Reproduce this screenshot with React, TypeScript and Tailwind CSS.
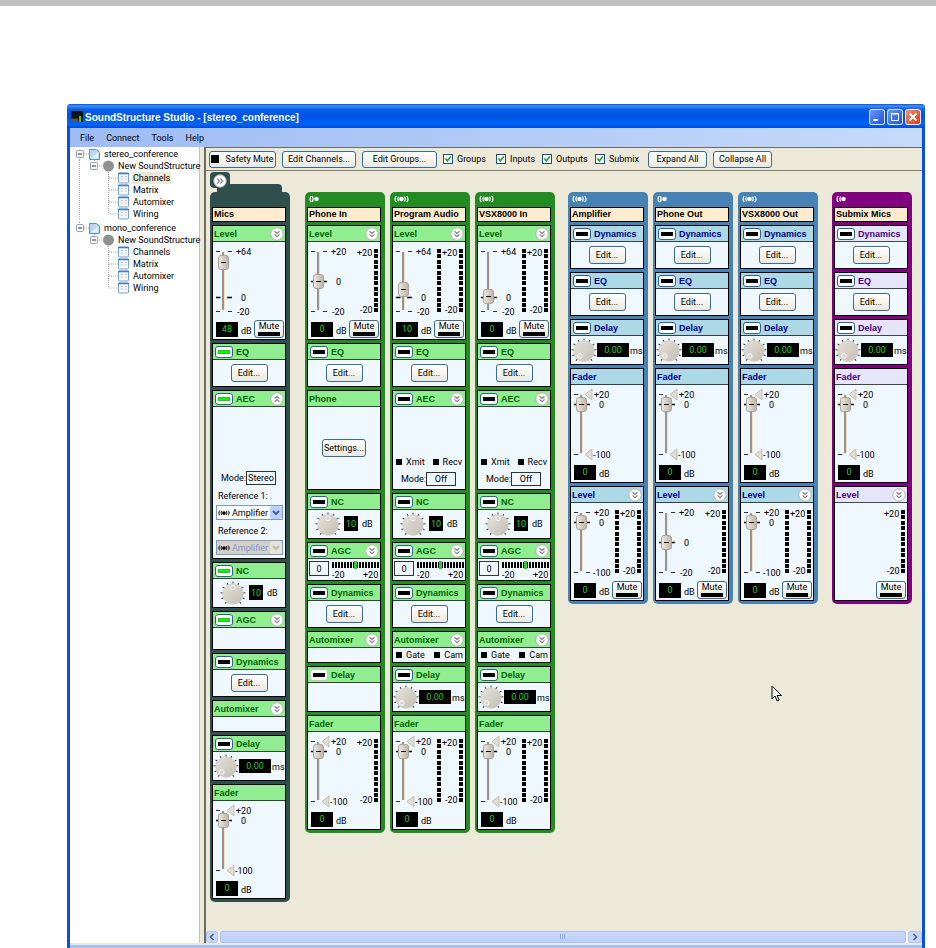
import type { ReactNode } from 'react'

type Tone = 'group' | 'input' | 'output' | 'submix'
type IconKind = 'mono' | 'stereo' | 'left'

const strips: Record<Tone, string> = {
  group: 'bg-[#2f4f4f]',
  input: 'bg-[#228b22]',
  output: 'bg-[#4682b4]',
  submix: 'bg-[#800080]',
}

const headers: Record<Tone, string> = {
  group: 'bg-[#90ee90] text-[#006400]',
  input: 'bg-[#90ee90] text-[#006400]',
  output: 'bg-[#add8e6] text-[#00008b]',
  submix: 'bg-[#e6e6fa] text-[#4b0082]',
}

const xpButton =
  'rounded-[3px] border border-[#3a6a98] bg-linear-to-b from-white to-[#ebe9de] text-black'

function classNames(...classes: (string | false | undefined)[]) {
  return classes.filter(Boolean).join(' ')
}

function SignalIcon({ kind, className }: { kind: IconKind; className?: string }) {
  return (
    <svg width="15" height="8" viewBox="0 0 15 8" className={className} aria-hidden="true">
      <g fill="none" stroke="currentColor" strokeWidth="1.2">
        <path d="M2.2 1C.8 2.8.8 5.2 2.2 7" />
        {kind !== 'mono' && <path d="M4.6 1.6c-1 1.500-1 3.300 0 4.800" />}
        {kind === 'mono' && <path d="M3.200 1c1.100 1.800 1.100 4.200 0 6" />}
        {kind === 'stereo' && <path d="M10.400 1.600c1 1.500 1 3.300 0 4.800M12.800 1c1.400 1.800 1.400 4.200 0 6" />}
      </g>
      <circle cx="7.500" cy="4" r="2.300" fill="currentColor" />
    </svg>
  )
}

function Chevrons({ direction = 'down' }: { direction?: 'down' | 'up' | 'right' }) {
  const angle = { down: 0, up: 180, right: -90 }[direction]
  return (
    <svg width="14" height="14" viewBox="0 0 14 14" aria-hidden="true">
      <circle cx="7" cy="7" r="6.200" fill="#fff" stroke="#b5b5b5" />
      <path
        d="M4.500 4.200 7 6.500l2.500-2.300M4.500 7.400 7 9.700l2.500-2.300"
        transform={`rotate(${angle} 7 7)`}
        fill="none"
        stroke="#858585"
        strokeWidth="1.200"
      />
    </svg>
  )
}

type SectionProps = {
  tone: Tone
  title: string
  height: string
  toggle?: 'on' | 'off' | 'disabled'
  expand?: 'down' | 'up'
  children?: ReactNode
}

function Section({ tone, title, height, toggle, expand, children }: SectionProps) {
  return (
    <section className={classNames('flex flex-col border border-black bg-[#f0f8ff]', height)}>
      <header
        className={classNames(
          'flex h-4 shrink-0 items-center border-b border-black/70 font-[Liberation_Sans,sans-serif] text-[9px] font-bold',
          headers[tone]
        )}>
        {toggle && (
          <button
            type="button"
            aria-label={`${title} enable`}
            aria-pressed={toggle === 'on'}
            className={classNames(
              'mr-[3px] ml-0.5 flex h-3 w-[18px] items-center justify-center rounded-[3px] border bg-white',
              toggle === 'disabled' ? 'border-[#c9c7ba]' : 'border-[#2c628b]'
            )}>
            <span className={classNames('h-1 w-3', toggle === 'on' ? 'border border-[#2fbf2f] bg-[#00ff00]' : 'bg-black')} />
          </button>
        )}
        <h3 className={classNames('grow whitespace-nowrap', !toggle && 'pl-px')}>{title}</h3>
        {expand && (
          <button type="button" aria-label={`Expand ${title}`} className="mr-px">
            <Chevrons direction={expand} />
          </button>
        )}
      </header>
      {children}
    </section>
  )
}

function Readout({ label, value, className }: { label: string; value: string; className: string }) {
  return (
    <input
      aria-label={label}
      defaultValue={value}
      className={classNames('bg-black text-center text-[9px] text-[#22c82e] outline-none', className)}
    />
  )
}

// Travel runs from y=9 (max) to y=69 (min)
function Slider({ label, min, max, value, markers }: { label: string; min: number; max: number; value: number; markers?: boolean }) {
  const zero = Math.round(9 + (60 * max) / (max - min))
  return (
    <div className="grid">
      <svg width="44" height="78" className="col-start-1 row-start-1" aria-hidden="true">
        <path d="M10 10v58" stroke="#9b9389" strokeWidth="2" />
        <path d="M11.500 10v58" stroke="#f2e3cd" />
        <path d={markers ? 'M3 9.500h4M3 69.500h4' : 'M3 9.500h4M15 9.500h4M3 69.500h4M15 69.500h4'} stroke="#333" />
        <path d={`M3 ${zero + 0.5}h4.500M14 ${zero + 0.5}h5`} stroke="#000" strokeWidth="1.400" />
        {markers && (
          <path d="M14 9.500l7-5.500v11zM14 69.500l7-5.500v11z" fill="#e0ddd2" stroke="#b9b5a6" strokeWidth=".8" />
        )}
        <g fill="#000" fontSize="9">
          <text x="23" y="13">+{max}</text>
          <text x="28" y={zero + 4}>0</text>
          <text x={min < -99 ? 22 : 24} y="73">{min}</text>
        </g>
      </svg>
      <input
        type="range"
        aria-label={label}
        min={min}
        max={max}
        defaultValue={value}
        className="col-start-1 row-start-1 mt-0.5 ml-[5px] h-[74px] w-[11px] appearance-none bg-transparent [direction:rtl] [writing-mode:vertical-lr] [&::-webkit-slider-thumb]:h-[15px] [&::-webkit-slider-thumb]:w-[11px] [&::-webkit-slider-thumb]:appearance-none [&::-webkit-slider-thumb]:rounded-[3px] [&::-webkit-slider-thumb]:border [&::-webkit-slider-thumb]:border-[#aaa395] [&::-webkit-slider-thumb]:[background:linear-gradient(#111,#111)_center/5px_1px_no-repeat,linear-gradient(90deg,#ebe7dd,#bdb6a8)]"
      />
    </div>
  )
}

function Meter({ stereo }: { stereo?: boolean }) {
  const segments = Array.from({ length: 12 }, (_, i) => Math.round(7 + i * 5.4))
  return (
    <svg width="28" height="78" aria-hidden="true">
      {segments.map((y) => (
        <g key={y} shapeRendering="crispEdges">
          {stereo && <rect x="0" y={y} width="4" height="4" />}
          <rect x="22" y={y} width="4" height="4" />
        </g>
      ))}
      <text x="5" y="14" fontSize="9">+20</text>
      <text x="8" y="71" fontSize="9">-20</text>
    </svg>
  )
}

function MuteButton() {
  return (
    <button type="button" className={classNames(xpButton, 'ml-auto flex h-[18px] w-[30px] flex-col items-center justify-between pb-px leading-[11px]')}>
      Mute
      <span className="h-1 w-[22px] shrink-0 bg-black" />
    </button>
  )
}

type LevelProps = {
  tone: Tone
  min: number
  max: number
  value: number
  meter?: 'mono' | 'stereo'
}

function Level({ tone, min, max, value, meter }: LevelProps) {
  return (
    <Section tone={tone} title="Level" height="h-[115px]" expand="down">
      <div className="flex">
        <Slider label="Level" min={min} max={max} value={value} />
        {meter && <Meter stereo={meter === 'stereo'} />}
      </div>
      <div className="flex items-center pr-px pl-[3px]">
        <Readout label="Level in dB" value={String(value)} className="h-[15px] w-[22px]" />
        <span className="pt-1 pl-[3px]">dB</span>
        <MuteButton />
      </div>
    </Section>
  )
}

function Fader({ tone, meter }: { tone: Tone; meter?: 'mono' | 'stereo' }) {
  return (
    <Section tone={tone} title="Fader" height="h-[115px]">
      <div className="flex">
        <Slider label="Fader" min={-100} max={20} value={0} markers />
        {meter && <Meter stereo={meter === 'stereo'} />}
      </div>
      <div className="flex h-[18px] items-center pl-[3px]">
        <Readout label="Fader in dB" value="0" className="h-[15px] w-[22px]" />
        <span className="pt-1 pl-[3px]">dB</span>
      </div>
    </Section>
  )
}

function EditSection({ tone, title, toggle = 'off' }: { tone: Tone; title: string; toggle?: 'on' | 'off' }) {
  return (
    <Section tone={tone} title={title} height="h-11" toggle={toggle}>
      <div className="flex grow items-center justify-center">
        <button type="button" className={classNames(xpButton, 'h-[18px] w-[37px]')}>Edit...</button>
      </div>
    </Section>
  )
}

function Knob({ label, angle }: { label: string; angle: number }) {
  const ticks = Array.from({ length: 11 }, (_, i) => -140 + i * 28)
  return (
    <div className="grid shrink-0">
      <svg width="26" height="28" viewBox="0 0 26 28" className="col-start-1 row-start-1" aria-hidden="true">
        <defs>
          <linearGradient id="knob" x1="0" y1="0" x2="1" y2="1">
            <stop offset="0" stopColor="#e6e3dc" />
            <stop offset="1" stopColor="#c2bdb2" />
          </linearGradient>
        </defs>
        {ticks.map((tick) => (
          <path key={tick} d="M13 2.500v3" stroke="#444" transform={`rotate(${tick} 13 15)`} />
        ))}
        <circle cx="13" cy="15" r="10.300" fill="url(#knob)" stroke="#d3cfc6" strokeWidth=".8" />
        <circle cx="13" cy="8.500" r="2.200" fill="#d8d4ca" stroke="#f5f3ee" transform={`rotate(${angle} 13 15)`} />
      </svg>
      <input type="range" aria-label={label} className="col-start-1 row-start-1 h-7 w-[26px] opacity-0" />
    </div>
  )
}

function NoiseCancel({ tone, toggle = 'off' }: { tone: Tone; toggle?: 'on' | 'off' }) {
  return (
    <Section tone={tone} title="NC" height="h-[46px]" toggle={toggle}>
      <div className="flex items-start pl-[7px]">
        <Knob label="Noise cancellation" angle={0} />
        <Readout label="Noise cancellation in dB" value="10" className="mt-1.5 ml-[3px] h-[15px] w-3.5" />
        <span className="pt-2 pl-1">dB</span>
      </div>
    </Section>
  )
}

function Delay({ tone }: { tone: Tone }) {
  return (
    <Section tone={tone} title="Delay" height="h-[46px]" toggle="off">
      <div className="flex items-start">
        <Knob label="Delay" angle={-140} />
        <Readout label="Delay in ms" value="0.00" className="mt-[7px] h-3.5 w-8 shrink-0" />
        <span className="pt-[9px] pl-px">ms</span>
      </div>
    </Section>
  )
}

function GainControl({ tone }: { tone: Tone }) {
  return (
    <Section tone={tone} title="AGC" height="h-[39px]" toggle="off" expand="down">
      <div className="flex gap-[3px] pt-0.5 pl-px">
        <output className="flex h-[15px] w-5 items-center justify-center border border-[#333]">0</output>
        <svg width="48" height="19" aria-hidden="true">
          {Array.from({ length: 16 }, (_, i) => (
            <rect key={i} x={i * 3} y="1" width="2" height="6" shapeRendering="crispEdges" />
          ))}
          <rect x="22" y="0" width="3" height="8" fill="#2fcf2f" />
          <text x="0" y="17" fontSize="9">-20</text>
          <text x="31" y="17" fontSize="9">+20</text>
        </svg>
      </div>
    </Section>
  )
}

function Lamp({ children }: { children: ReactNode }) {
  return (
    <span className="flex items-center gap-1">
      <span className="size-1.5 bg-black" />
      {children}
    </span>
  )
}

function Mode({ value }: { value: string }) {
  return (
    <div className="flex items-center gap-[3px] pl-2">
      <span className="w-[22px]">Mode:</span>
      <output className="flex h-3.5 w-[30px] items-center justify-center border border-[#333]">{value}</output>
    </div>
  )
}

function Reference({ id, label, disabled }: { id: string; label: string; disabled?: boolean }) {
  return (
    <div className="px-0.5">
      <label htmlFor={id} className="block h-5 pt-[5px] pl-0.5">{label}</label>
      <div className="grid items-center">
        <select
          id={id}
          disabled={disabled}
          className={classNames(
            'col-start-1 row-start-1 h-[15px] appearance-none border border-[#7f9db9] pl-[15px] leading-3 opacity-100',
            disabled ? 'bg-[#d4d0c8] text-[#7f95d8]' : 'bg-white'
          )}>
          <option>Amplifier</option>
        </select>
        <SignalIcon kind="stereo" className="pointer-events-none z-10 col-start-1 row-start-1 ml-0.5 w-3" />
        <span
          className={classNames(
            'pointer-events-none z-10 col-start-1 row-start-1 mr-px flex h-[13px] w-3 items-center justify-center justify-self-end rounded-xs',
            disabled ? 'bg-[#e6e3d8] text-[#bbb7a8]' : 'bg-[#bdd0fb] text-[#41598f]'
          )}>
          <svg width="8" height="6" aria-hidden="true">
            <path d="M1 1l3 3 3-3" fill="none" stroke="currentColor" strokeWidth="1.800" />
          </svg>
        </span>
      </div>
    </div>
  )
}

function EchoCancel({ tone }: { tone: Tone }) {
  return (
    <Section tone={tone} title="AEC" height="h-[100px]" toggle="off" expand="down">
      <div className="mt-auto flex justify-between pr-[3px] pb-1 pl-[3px]">
        <Lamp>Xmit</Lamp>
        <Lamp>Recv</Lamp>
      </div>
      <div className="pb-[3px]">
        <Mode value="Off" />
      </div>
    </Section>
  )
}

function Automixer({ tone, lamps }: { tone: Tone; lamps?: boolean }) {
  return (
    <Section tone={tone} title="Automixer" height="h-8" expand="down">
      {lamps && (
        <div className="flex grow items-center justify-between pr-0.5 pl-[3px]">
          <Lamp>Gate</Lamp>
          <Lamp>Cam</Lamp>
        </div>
      )}
    </Section>
  )
}

function Strip({ tone, name, icon, children }: { tone: Tone; name: string; icon?: IconKind; children: ReactNode }) {
  return (
    <article className={classNames('flex w-20 shrink-0 flex-col gap-[3px] rounded-[5px] pr-1 pb-[3px] pl-0.5', strips[tone])}>
      <div>
        <div className="h-[15px] pt-[3px] pl-0.5 text-white">{icon && <SignalIcon kind={icon} />}</div>
        <h2 className="h-[15px] border border-black bg-[#ffebcd] pl-px font-[Liberation_Sans,sans-serif] text-[9px] leading-[13px] font-bold whitespace-nowrap">
          {name}
        </h2>
      </div>
      {children}
    </article>
  )
}

function GroupStrip() {
  return (
    <div>
      <div className="grid h-5">
        <svg width="80" height="24" className="col-start-1 row-start-1" aria-hidden="true">
          <path
            d="M4 0h12q4 0 4 4v8h48q4 0 4 4v8H4v-4h3v-4H5Q0 16 0 12V4Q0 0 4 0z"
            fill="#2f4f4f"
          />
        </svg>
        <button type="button" aria-label="Expand group" className="z-10 col-start-1 row-start-1 mt-0.5 ml-[3px] self-start justify-self-start">
          <Chevrons direction="right" />
        </button>
      </div>
      <Strip tone="group" name="Mics">
        <Level tone="group" min={-20} max={64} value={48} />
        <EditSection tone="group" title="EQ" toggle="on" />
        <Section tone="group" title="AEC" height="h-[169px]" toggle="on" expand="up">
          <div className="mt-auto pb-[3px]">
            <Mode value="Stereo" />
            <div className="pl-px">
              <Reference id="reference-1" label="Reference 1:" />
              <Reference id="reference-2" label="Reference 2:" disabled />
            </div>
          </div>
        </Section>
        <NoiseCancel tone="group" toggle="on" />
        <Section tone="group" title="AGC" height="h-[39px]" toggle="on" expand="down" />
        <EditSection tone="group" title="Dynamics" />
        <Automixer tone="group" />
        <Delay tone="group" />
        <Fader tone="group" />
      </Strip>
    </div>
  )
}

function PhoneInStrip() {
  return (
    <Strip tone="input" name="Phone In" icon="mono">
      <Level tone="input" min={-20} max={20} value={0} meter="mono" />
      <EditSection tone="input" title="EQ" />
      <Section tone="input" title="Phone" height="h-[100px]">
        <div className="flex grow items-center justify-center">
          <button type="button" className={classNames(xpButton, 'h-[18px] w-11')}>Settings...</button>
        </div>
      </Section>
      <NoiseCancel tone="input" />
      <GainControl tone="input" />
      <EditSection tone="input" title="Dynamics" />
      <Automixer tone="input" />
      <Section tone="input" title="Delay" height="h-[46px]" toggle="disabled" />
      <Fader tone="input" meter="mono" />
    </Strip>
  )
}

function InputStrip({ name, level }: { name: string; level: number }) {
  return (
    <Strip tone="input" name={name} icon="stereo">
      <Level tone="input" min={-20} max={64} value={level} meter="stereo" />
      <EditSection tone="input" title="EQ" />
      <EchoCancel tone="input" />
      <NoiseCancel tone="input" />
      <GainControl tone="input" />
      <EditSection tone="input" title="Dynamics" />
      <Automixer tone="input" lamps />
      <Delay tone="input" />
      <Fader tone="input" meter="stereo" />
    </Strip>
  )
}

function OutputStrip({ tone, name, icon, children }: { tone: Tone; name: string; icon: IconKind; children: ReactNode }) {
  return (
    <Strip tone={tone} name={name} icon={icon}>
      <EditSection tone={tone} title="Dynamics" />
      <EditSection tone={tone} title="EQ" />
      <Delay tone={tone} />
      <Fader tone={tone} />
      {children}
    </Strip>
  )
}

function Expander() {
  return (
    <g>
      <rect x="6.500" y="2.500" width="7" height="7" rx="1" fill="#f7f6f0" stroke="#8fa3bd" />
      <path d="M8 6h4" stroke="#333" />
    </g>
  )
}

const pages = ['Channels', 'Matrix', 'Automixer', 'Wiring']

function Project({ name, selected, first }: { name: string; selected?: string; first?: boolean }) {
  const rail = first ? <path d="M9.500 0v12" stroke="#aaa" strokeDasharray="1 1" /> : null
  return (
    <li className="mb-0.5">
      <a href={`#${name}`} className="flex h-3 items-center">
        <svg width="34" height="12" className="shrink-0" aria-hidden="true">
          <path d={first ? 'M9.500 9v3M14 6h5' : 'M9.500 0v2M14 6h5'} stroke="#aaa" strokeDasharray="1 1" />
          <Expander />
          <path d="M19.500 1.500h7l3 3v7h-10z" fill="#b9d7f7" stroke="#5b93cf" />
          <path d="M21 10.500 28 4v6.500z" fill="#fff" opacity=".7" />
        </svg>
        {name}
      </a>
      <ul>
        <li>
          <a href={`#${name}-device`} className="flex h-3 items-center whitespace-nowrap">
            <svg width="48" height="12" className="shrink-0" aria-hidden="true">
              {rail}
              <path d="M24.500 0v2M29 6h4" stroke="#aaa" strokeDasharray="1 1" />
              <g transform="translate(14 0)">
                <Expander />
              </g>
              <circle cx="38.500" cy="6" r="5.500" fill="#8f8f8f" />
            </svg>
            New SoundStructure
          </a>
        </li>
        {pages.map((page, i) => (
          <li key={page}>
            <a href={`#${name}-${page}`} className="flex h-3 items-center">
              <svg width="60" height="12" className="shrink-0" aria-hidden="true">
                {rail}
                <path
                  d={i === pages.length - 1 ? 'M38.500 0v6h10' : 'M38.500 0v12M39 6h9'}
                  fill="none"
                  stroke="#aaa"
                  strokeDasharray="1 1"
                />
                <rect x="48.500" y="1" width="10" height="10" rx="1" fill="#f4f6f8" stroke="#7ba3cc" />
                <path d="M48 1.500h11" stroke="#3f7fbf" strokeWidth="1.500" />
                <path d="M50.500 4.500h3M50.500 7h3M55 4.500h2M55 7h2" stroke="#ccc" />
              </svg>
              <span className={classNames('ml-0.5 px-px leading-3', page === selected && 'bg-[#ece9d8]')}>{page}</span>
            </a>
          </li>
        ))}
      </ul>
    </li>
  )
}

const filters = [
  { name: 'Groups', width: 'w-[53px]' },
  { name: 'Inputs', width: 'w-[46px]' },
  { name: 'Outputs', width: 'w-[53px]' },
  { name: 'Submix', width: 'w-[53px]' },
]

function Toolbar() {
  return (
    <div className="flex h-[23px] items-center border-b border-[#7d7b6f] pl-[3px] whitespace-nowrap">
      <button type="button" className={classNames(xpButton, 'flex h-[17px] w-[67px] items-center justify-center gap-1.5')}>
        <span className="size-2 bg-black" />
        Safety Mute
      </button>
      <button type="button" className={classNames(xpButton, 'ml-1.5 h-[17px] w-[74px]')}>Edit Channels...</button>
      <button type="button" className={classNames(xpButton, 'ml-1.5 h-[17px] w-[75px]')}>Edit Groups...</button>
      <div className="ml-1.5 flex">
        {filters.map((filter) => (
          <label key={filter.name} className={classNames('flex items-center gap-1', filter.width)}>
            <span className="grid size-2.5">
              <input
                type="checkbox"
                defaultChecked
                className="peer col-start-1 row-start-1 size-2.5 appearance-none border border-[#1c5180] bg-white"
              />
              <svg viewBox="0 0 10 10" className="pointer-events-none invisible col-start-1 row-start-1 peer-checked:visible" aria-hidden="true">
                <path d="M2.500 4.500 4.300 7l3.500-4.500" fill="none" stroke="#21a121" strokeWidth="1.600" />
              </svg>
            </span>
            {filter.name}
          </label>
        ))}
      </div>
      <button type="button" className={classNames(xpButton, 'h-[17px] w-[59px]')}>Expand All</button>
      <button type="button" className={classNames(xpButton, 'ml-1.5 h-[17px] w-[59px]')}>Collapse All</button>
    </div>
  )
}

const captionButton = 'flex size-4 items-center justify-center rounded-[3px] border border-white/80'

function TitleBar() {
  return (
    <header className="flex h-6 items-center rounded-t-[4px] bg-[linear-gradient(#0a4fd0,#3a92ff_8%,#0a5ee8_22%,#0054e3_50%,#0064fa_85%,#0048d0)] pr-1 pl-1">
      <svg width="13" height="11" aria-hidden="true">
        <path d="M0 0h12v11H0z" fill="#111" />
        <path d="M0 7.500h7v3.500H0z" fill="#4d5b52" />
        <path d="M8 5h2v6H8z" fill="#1fd12a" />
      </svg>
      <h1 className="grow pt-1 pl-px font-[Liberation_Sans,sans-serif] text-[10px] leading-4 font-bold text-white">
        SoundStructure Studio - [stereo_conference]
      </h1>
      <div className="flex gap-[2px] pt-0.5">
        <button type="button" aria-label="Minimize" className={classNames(captionButton, 'bg-linear-to-br from-[#6d96f5] to-[#1c4fdb]')}>
          <svg width="12" height="12" aria-hidden="true"><path d="M2 9h5" stroke="#fff" strokeWidth="2" /></svg>
        </button>
        <button type="button" aria-label="Maximize" className={classNames(captionButton, 'bg-linear-to-br from-[#6d96f5] to-[#1c4fdb]')}>
          <svg width="12" height="12" aria-hidden="true"><path d="M2.500 2.500h7v7h-7zM2 3h8" fill="none" stroke="#fff" /></svg>
        </button>
        <button type="button" aria-label="Close" className={classNames(captionButton, 'bg-linear-to-br from-[#f09070] to-[#d13a10]')}>
          <svg width="12" height="12" aria-hidden="true"><path d="M2.500 2.500l7 7M9.500 2.500l-7 7" stroke="#fff" strokeWidth="1.800" /></svg>
        </button>
      </div>
    </header>
  )
}

function ScrollBar() {
  return (
    <div className="flex h-3 shrink-0 gap-0.5 bg-[#f6f5ee]">
      <button type="button" aria-label="Scroll left" className="flex w-3 items-center justify-center rounded-xs border border-[#b4c8f5] bg-[#c8d8fc]">
        <svg width="6" height="8" aria-hidden="true"><path d="M4.500 1 1.500 4l3 3" fill="none" stroke="#4d6185" strokeWidth="1.600" /></svg>
      </button>
      <div className="flex grow items-center justify-center rounded-xs border border-[#a9c0f3] bg-linear-to-b from-[#c9d9fd] to-[#bacffa]">
        <svg width="8" height="6" aria-hidden="true"><path d="M1.500 0v5M3.500 0v5M5.500 0v5" stroke="#8fabea" /></svg>
      </div>
      <button type="button" aria-label="Scroll right" className="flex w-3.5 items-center justify-center rounded-xs border border-[#b4c8f5] bg-[#c8d8fc]">
        <svg width="6" height="8" aria-hidden="true"><path d="M1.500 1l3 3-3 3" fill="none" stroke="#4d6185" strokeWidth="1.600" /></svg>
      </button>
    </div>
  )
}

export default function App() {
  return (
    <div className="relative flex min-h-screen flex-col bg-white font-[Roboto,'Liberation_Sans',sans-serif] text-[9px] leading-3 text-black">
      <div className="h-1.5 bg-[#c0c0c0]" />
      <main className="mt-[98px] mr-[11px] ml-[67px] flex grow flex-col rounded-t-[4px] bg-[#0a50e0]">
        <TitleBar />
        <div className="mx-[3px] flex grow flex-col bg-[#ece9d8]">
          <nav className="flex h-[19px] items-center gap-3 bg-linear-to-r from-[#9ebbf3] to-[#c6dbfa] pl-2.5">
            {['File', 'Connect', 'Tools', 'Help'].map((item) => (
              <a key={item} href={`#${item}`}>{item}</a>
            ))}
          </nav>
          <div className="flex grow">
            <ul className="w-[130px] shrink-0 border-r border-[#b9c4cf] bg-white pt-px">
              <Project name="stereo_conference" selected="Channels" first />
              <Project name="mono_conference" />
            </ul>
            <div className="ml-1 flex min-w-0 grow flex-col border-t border-l-2 border-[#6e6c62]">
              <Toolbar />
              <div className="flex grow items-start overflow-hidden pt-px pb-7 pl-1">
                <GroupStrip />
                <div className="mt-5 ml-[15px] flex gap-[5px]">
                  <PhoneInStrip />
                  <InputStrip name="Program Audio" level={10} />
                  <InputStrip name="VSX8000 In" level={0} />
                </div>
                <div className="mt-5 ml-[13px] flex gap-[5px]">
                  <OutputStrip tone="output" name="Amplifier" icon="stereo">
                    <Level tone="output" min={-100} max={20} value={0} meter="stereo" />
                  </OutputStrip>
                  <OutputStrip tone="output" name="Phone Out" icon="mono">
                    <Level tone="output" min={-20} max={20} value={0} meter="mono" />
                  </OutputStrip>
                  <OutputStrip tone="output" name="VSX8000 Out" icon="stereo">
                    <Level tone="output" min={-100} max={20} value={0} meter="stereo" />
                  </OutputStrip>
                </div>
                <div className="mt-5 ml-3.5">
                  <OutputStrip tone="submix" name="Submix Mics" icon="left">
                    <Section tone="submix" title="Level" height="h-[115px]" expand="down">
                      <div className="flex justify-end">
                        <Meter />
                      </div>
                      <div className="flex pr-px">
                        <MuteButton />
                      </div>
                    </Section>
                  </OutputStrip>
                </div>
              </div>
              <ScrollBar />
            </div>
          </div>
          <div className="mt-0.5 h-[3px] bg-[#a6c2f5]" />
        </div>
      </main>
      <svg width="12" height="18" viewBox="0 0 12 18" className="absolute top-[685px] left-[771px]" aria-hidden="true">
        <path d="M1 1v13l3-3 2.200 5 2-1L6 10.500h4.500z" fill="#fff" stroke="#000" />
      </svg>
    </div>
  )
}
